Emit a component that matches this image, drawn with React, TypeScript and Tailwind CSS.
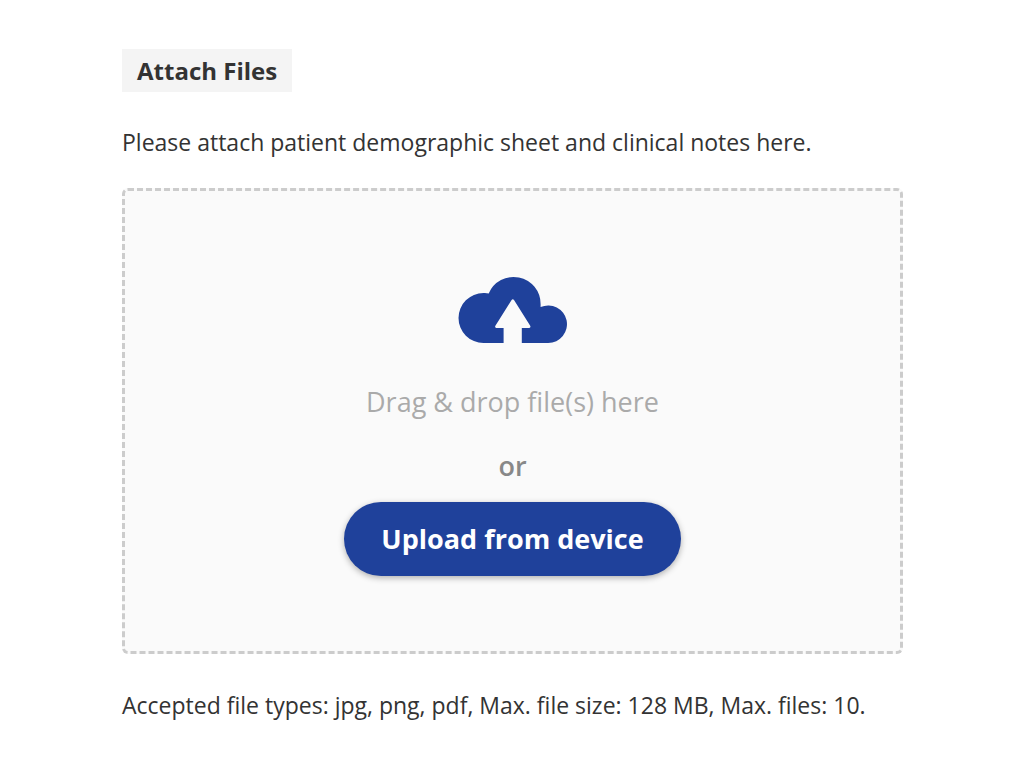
import React from 'react';

const UploadCloud: React.FC = () => (
  <svg viewBox="0 0 110 68" className="h-[68px] w-[110px]" aria-hidden="true">
    <path
      fill="#1f419b"
      d="M25.500 67A25 25 0 0 1 25.500 17Q28.500 16.800 30.700 17.500A27 27 0 0 1 82.600 28V31A18.800 18.800 0 1 1 90.200 67H63.800V52H71.200Q73 51.500 72.200 49.800L56 24Q54.800 22.300 53.600 24L37.400 49.800Q36.500 51.500 38.300 52H45.600V67Z"
    />
  </svg>
);

const App: React.FC = () => {
  return (
    <main className="mx-auto w-full pt-[49px] pr-[121px] pl-[122px] font-['Open_Sans',sans-serif] text-[#333]">
      <h1 className="inline-block bg-[#f4f4f4] px-[15px] py-1 text-2xl leading-[35px] font-bold">Attach Files</h1>
      <p className="mt-8 text-[23px] leading-9">Please attach patient demographic sheet and clinical notes here.</p>
      <section className="mt-7 flex flex-col items-center rounded-md border-3 border-dashed border-[#ccc] bg-[#fafafa] px-6 pt-[85px] pb-[75px]">
        <UploadCloud />
        <p className="mt-10 text-[27px] leading-9 text-[#aaa]">Drag &amp; drop file(s) here</p>
        <p className="mt-7 text-[27px] leading-9 font-semibold text-[#888]">or</p>
        <button
          type="button"
          className="mt-[18px] cursor-pointer rounded-full bg-[#1f419b] px-[37px] py-[19px] text-[27px] leading-9 font-bold text-white shadow-[0_2px_6px_rgba(0,0,0,0.3)]"
        >
          Upload from device
        </button>
      </section>
      <p className="mt-[33px] text-[23px] leading-9">Accepted file types: jpg, png, pdf, Max. file size: 128 MB, Max. files: 10.</p>
    </main>
  );
};

export default App;
